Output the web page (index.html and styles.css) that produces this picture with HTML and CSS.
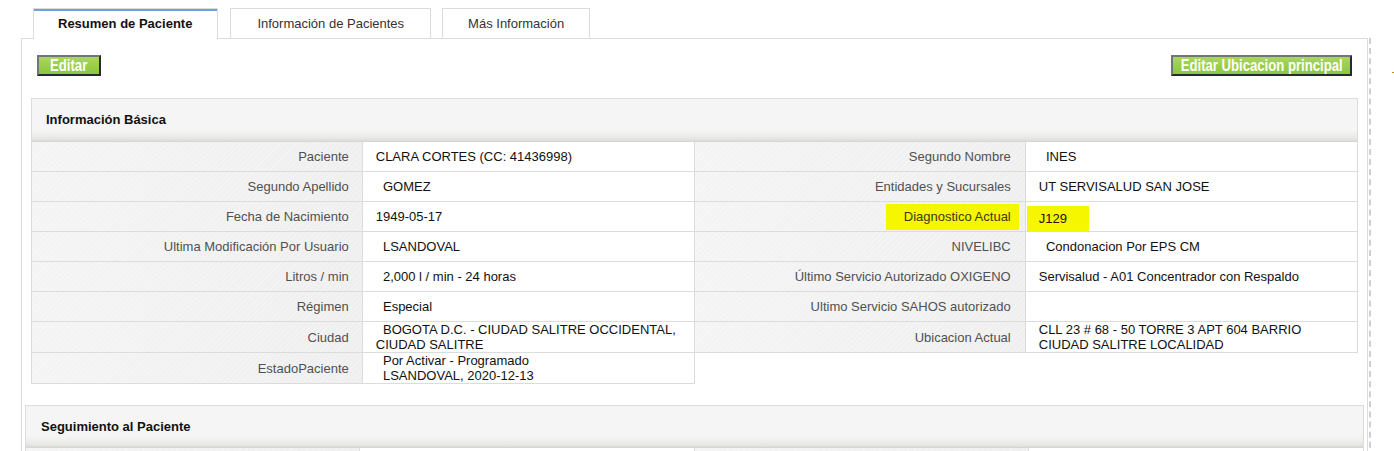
FILE: index.html
```html
<!DOCTYPE html>
<html lang="es">
<head>
<meta charset="utf-8">
<title>Resumen de Paciente</title>
<link rel="stylesheet" href="styles.css">
</head>
<body>
<div class="page">
  <div class="frame">
    <nav class="tabs">
      <div class="tab active">Resumen de Paciente</div>
      <div class="tab tab-info">Información de Pacientes</div>
      <div class="tab">Más Información</div>
    </nav>
    <div class="panel-wrap">
      <div class="panel">
        <div class="toolbar">
          <button class="btn btn-small"><span class="btn-label">Editar</span></button>
          <button class="btn btn-wide"><span class="btn-label">Editar Ubicacion principal</span></button>
        </div>

        <section class="section basic">
          <h2 class="section-head">Información Básica</h2>
          <div class="cols">
            <div class="kv kv-left">
              <div class="row"><div class="k">Paciente</div><div class="v">CLARA CORTES (CC: 41436998)</div></div>
              <div class="row"><div class="k">Segundo Apellido</div><div class="v">&nbsp;&nbsp;GOMEZ</div></div>
              <div class="row"><div class="k">Fecha de Nacimiento</div><div class="v">1949-05-17</div></div>
              <div class="row"><div class="k">Ultima Modificación Por Usuario</div><div class="v">&nbsp;&nbsp;LSANDOVAL</div></div>
              <div class="row"><div class="k">Litros / min</div><div class="v">&nbsp;&nbsp;2,000 l / min - 24 horas</div></div>
              <div class="row"><div class="k">Régimen</div><div class="v">&nbsp;&nbsp;Especial</div></div>
              <div class="row"><div class="k">Ciudad</div><div class="v"><span>&nbsp;&nbsp;BOGOTA D.C. - CIUDAD SALITRE OCCIDENTAL, CIUDAD SALITRE</span></div></div>
              <div class="row"><div class="k">EstadoPaciente</div><div class="v"><span>&nbsp;&nbsp;Por Activar - Programado<br>&nbsp;&nbsp;LSANDOVAL, 2020-12-13</span></div></div>
            </div>
            <div class="kv kv-right">
              <div class="row"><div class="k">Segundo Nombre</div><div class="v">&nbsp;&nbsp;INES</div></div>
              <div class="row"><div class="k">Entidades y Sucursales</div><div class="v">UT SERVISALUD SAN JOSE</div></div>
              <div class="row"><div class="k"><span class="hl hl-k">Diagnostico Actual</span></div><div class="v"><span class="hl hl-v">J129</span></div></div>
              <div class="row"><div class="k">NIVELIBC</div><div class="v">&nbsp;&nbsp;Condonacion Por EPS CM</div></div>
              <div class="row"><div class="k">Último Servicio Autorizado OXIGENO</div><div class="v">Servisalud - A01 Concentrador con Respaldo</div></div>
              <div class="row"><div class="k">Ultimo Servicio SAHOS autorizado</div><div class="v"></div></div>
              <div class="row"><div class="k">Ubicacion Actual</div><div class="v"><span>CLL 23 # 68 - 50 TORRE 3 APT 604 BARRIO CIUDAD SALITRE LOCALIDAD</span></div></div>
            </div>
          </div>
        </section>

        <section class="section follow">
          <h2 class="section-head">Seguimiento al Paciente</h2>
          <div class="cols">
            <div class="kv kv-left">
              <div class="row"><div class="k"></div><div class="v"></div></div>
            </div>
            <div class="kv kv-right">
              <div class="row"><div class="k"></div><div class="v"></div></div>
            </div>
          </div>
        </section>
      </div>
    </div>
  </div>
  <span class="edge-mark"></span>
</div>
</body>
</html>
```

FILE: styles.css
```css
html, body {
  margin: 0;
  height: 100%;
  overflow: hidden;
  background: #fff;
}

body {
  font-family: "Liberation Sans", Arial, sans-serif;
  font-size: 13px;
  color: #111;
}

.page {
  display: flex;
  align-items: flex-start;
  height: 100vh;
  padding-left: 21px;
  box-sizing: border-box;
}

.frame {
  display: flex;
  flex-direction: column;
  width: 1350px;
  height: 100%;
}

/* Tabs */
.tabs {
  display: flex;
  align-items: flex-end;
  gap: 12px;
  padding: 8px 0 0 12px;
}

.tab {
  height: 29px;
  line-height: 29px;
  padding: 0 25px;
  border: 1px solid #dcdcdc;
  border-bottom: none;
  background: #fff;
  color: #333;
}

.tab-info {
  padding: 0 26px;
  margin-right: -1px;
}

.tab.active {
  height: 30px;
  margin-bottom: -1px;
  padding: 0 25px 0 24px;
  position: relative;
  z-index: 1;
  color: #111;
  font-weight: bold;
  box-shadow: inset 0 2px 0 #68a2df;
}

/* Panel */
.panel-wrap {
  flex: 1;
  display: flex;
  padding-right: 1px;
  border-right: 2px dashed #cfcfcf;
}

.panel {
  flex: 1;
  border: 1px solid #dcdcdc;
  border-bottom: none;
}

.toolbar {
  display: flex;
  justify-content: space-between;
  align-items: flex-start;
  padding: 16px 15px 0;
}

.btn {
  box-sizing: border-box;
  display: flex;
  align-items: center;
  justify-content: center;
  height: 21px;
  margin: 0;
  padding: 0;
  border: 2px solid;
  border-color: #747474 #2a2a2a #2a2a2a #747474;
  background: linear-gradient(#a9d75a, #8cc63f);
  color: #fff;
  font-family: "Liberation Sans", Arial, sans-serif;
  font-weight: bold;
  font-size: 16px;
  line-height: 17px;
  cursor: pointer;
  overflow: hidden;
}

.btn-label {
  display: inline-block;
  white-space: nowrap;
  transform: scaleX(0.82);
}

.btn-small {
  width: 64px;
}

.btn-wide {
  width: 181px;
}

/* Sections */
.section {
  margin: 22px 9px 0;
}

.section.follow {
  margin: 21px 3px 0;
}

.section-head {
  margin: 0;
  height: 42px;
  line-height: 42px;
  padding-left: 14px;
  border: 1px solid #dcdcdc;
  border-bottom-color: #d6d6d2;
  background: linear-gradient(to bottom, #f5f5f5 0, #f5f5f5 74%, #e9e9e6 92%, #dddcd8 100%);
  font-size: 13px;
  font-weight: bold;
  color: #111;
}

.section.follow .section-head {
  height: 41px;
  line-height: 41px;
  padding-left: 15px;
}

.cols {
  display: grid;
  grid-template-columns: 1fr 1fr;
  align-items: start;
}

.kv-left {
  border-left: 1px solid #dcdcdc;
  border-right: 1px solid #dcdcdc;
}

.kv-right {
  border-right: 1px solid #dcdcdc;
}

.row {
  display: grid;
  grid-template-columns: 1fr 1fr;
  border-bottom: 1px solid #dcdcdc;
}

.k,
.v {
  display: flex;
  align-items: center;
  min-height: 29px;
  padding: 0 13px;
  line-height: 15px;
}

.k {
  justify-content: flex-end;
  text-align: right;
  color: #505050;
  border-right: 1px solid #dcdcdc;
  background:
    repeating-linear-gradient(135deg, rgba(255, 255, 255, 0.25) 0 1px, rgba(255, 255, 255, 0) 1px 4px),
    linear-gradient(to right, #f4f4f4, #efefef);
}

.v {
  color: #111;
  background: #fff;
}

.kv-right .k {
  padding-right: 14px;
}

/* Marker highlight */
.hl {
  display: inline-block;
  background: #f6f600;
  color: #3a3a10;
}

.hl-k {
  line-height: 26px;
  padding: 0 8px 0 18px;
  margin: 0 -8px 0 0;
}

.hl-v {
  line-height: 25px;
  padding: 0 22px 0 12px;
  margin: 3px 0 0 -12px;
  color: #2a1000;
}

.edge-mark {
  display: block;
  width: 2px;
  height: 1px;
  margin: 72px 0 0 21px;
  background: #c98a2e;
}
```
